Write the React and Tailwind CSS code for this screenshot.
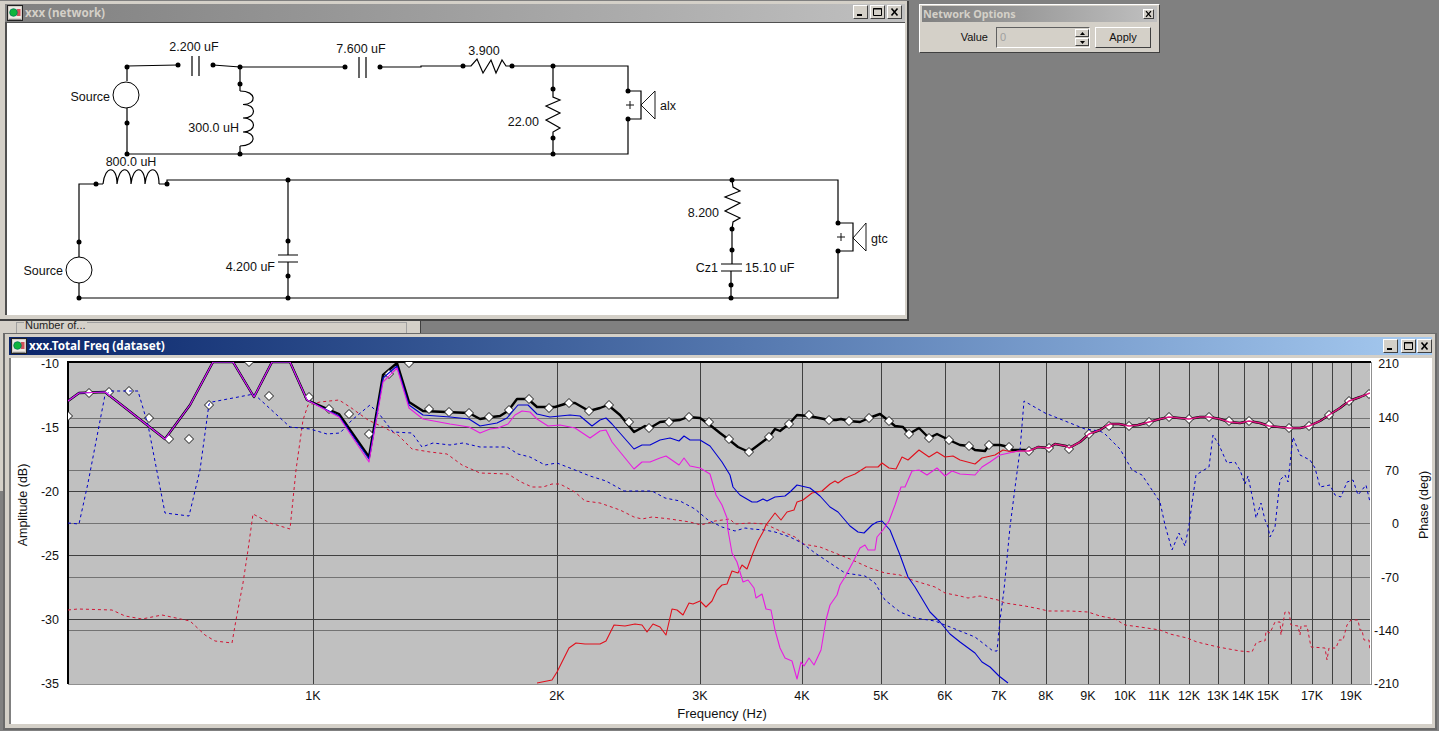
import React from "react";

const BLACK_LEFT =
  "68,401 79,393 105,392 165,439 190,405 213,362 233,362 254,397 272,362 290,362 307,400 339,414 369,457 383,375 397,363 409,402 423,411 469,413 480,419";
const BLACK_MID =
  "492,417 500,416 508,411 517,399 528,399 537,407 555,407 568,403 575,403 589,411 600,408 608,405 620,415 634,432 645,426 650,428 660,422 669,421 680,420 688,417 700,418 710,425 720,433 728,439 738,447 749,452 769,437 775,429 780,431 789,424 797,415 809,416 829,420 836,420 841,419 849,421 860,422 869,418 880,414 889,421 895,426 903,427 909,434 919,428 929,438 937,434 949,440 960,445 969,446 975,450 985,451 989,445 1000,445 1009,447 1012,450 1025,450";
const BLACK_TAIL =
  "1029,451 1038,447 1049,448 1055,444 1066,446 1069,448 1080,442 1089,434 1100,430 1106,426 1110,424 1119,424 1129,426 1138,425 1149,422 1160,419 1169,417 1189,419 1200,417 1209,417 1220,419 1229,422 1240,423 1249,421 1260,423 1269,426 1289,428 1300,428 1309,426 1320,421 1329,415 1340,408 1349,401 1360,397 1370,393";

const START = "68,401 79,393 105,392 165,439 190,405 213,362 233,362 254,397 272,362 290,362 307,400";

const BLUE =
  START +
  " 339,416 369,459 383,378 397,366 409,405 423,415 450,417 469,419 480,426 497,423 507,418 518,405 528,405 537,414 550,417 570,415 580,416 592,426 600,420 606,418 612,424 634,449 642,445 650,445 660,440 670,438 679,441 684,436 690,440 700,440 710,446 722,462 730,475 733,487 740,495 752,502 757,502 763,499 767,501 775,497 785,496 790,492 797,485 810,488 820,496 830,507 838,512 850,526 858,532 864,533 872,525 877,522 882,521 890,530 900,555 908,577 915,587 930,612 940,622 950,634 960,642 975,653 982,662 990,667 999,676 1008,683";

const MAGENTA =
  START +
  " 339,417 369,462 383,382 397,368 409,408 423,419 450,424 469,427 480,433 490,429 498,428 508,424 515,415 522,411 530,412 537,419 548,426 560,425 575,428 590,438 600,431 606,430 612,442 634,469 642,462 650,462 660,458 666,456 679,465 684,458 690,466 700,468 710,474 716,495 722,505 727,518 728,530 732,553 737,562 743,582 748,580 754,588 756,598 762,594 766,609 771,610 775,630 780,648 785,658 792,661 797,679 801,662 804,666 809,658 814,665 821,650 826,620 830,605 837,595 840,585 845,577 853,562 860,548 865,545 868,550 875,550 877,537 883,530 889,521 895,505 901,487 905,487 912,471 919,470 927,475 937,468 945,476 952,471 960,474 975,475 982,467 990,462 1000,455 1009,453 1018,451 1029,451";

const RED =
  "537,683 552,680 557,672 569,648 576,643 585,644 600,644 606,641 614,625 625,626 635,624 642,625 647,632 653,624 660,627 666,635 672,609 677,610 683,615 689,603 693,604 700,601 706,607 712,601 717,590 722,585 727,584 732,571 738,573 742,565 747,569 753,553 758,541 763,532 766,525 775,513 781,520 787,512 794,510 797,502 803,500 812,493 822,491 830,484 835,481 838,483 845,478 855,474 866,467 878,467 882,463 889,468 896,469 902,457 908,460 919,450 929,457 937,452 945,457 953,456 960,460 975,464 982,458 995,455 1003,450 1012,452 1020,451 1029,451";

const BLUE_DASH =
  "68,523 79,524 88,483 105,395 111,391 138,391 148,425 165,513 189,516 200,470 209,404 212,402 254,394 290,427 310,429 327,434 340,433 352,420 370,405 380,415 393,432 412,433 422,447 433,443 450,445 463,443 480,447 507,447 518,454 530,457 545,465 557,463 575,470 590,476 606,481 624,491 652,491 665,498 680,501 695,509 708,520 722,527 735,531 745,528 752,529 765,530 775,532 790,537 802,543 815,553 845,573 865,576 875,583 885,600 900,612 915,618 935,621 945,625 960,631 975,637 993,651 997,651 1000,620 1004,590 1008,548 1010,527 1016,480 1020,450 1024,401 1045,413 1085,429 1100,431 1105,434 1120,449 1132,470 1142,475 1160,502 1165,525 1172,550 1179,533 1185,546 1189,525 1196,475 1204,470 1209,467 1213,435 1219,445 1227,463 1235,462 1240,470 1245,484 1248,476 1254,505 1256,518 1261,503 1265,520 1268,527 1270,537 1275,527 1280,480 1285,475 1288,482 1293,437 1300,455 1310,460 1315,468 1320,487 1330,485 1335,495 1341,497 1347,482 1353,480 1358,495 1366,485 1370,502";

const RED_DASH =
  "68,610 78,609 112,610 125,616 142,619 162,615 190,621 205,635 215,641 232,643 236,620 243,583 248,550 253,514 270,523 290,529 296,470 303,420 308,405 320,402 339,400 350,407 368,420 385,428 398,435 412,449 430,452 447,454 462,465 480,473 508,474 521,482 532,487 543,487 552,484 560,484 575,492 585,501 600,503 620,510 634,517 642,519 652,517 670,519 690,522 701,525 715,521 730,519 735,524 750,523 765,524 778,530 795,537 803,544 820,547 835,553 850,559 870,568 885,573 900,575 912,580 935,587 945,593 960,596 968,598 980,596 998,600 1005,603 1025,606 1040,609 1048,611 1070,611 1088,612 1100,616 1115,619 1125,625 1140,627 1160,630 1170,634 1187,638 1197,642 1218,647 1240,651 1252,652 1256,643 1262,641 1265,641 1266,631 1270,633 1275,622 1280,622 1281,635 1285,612 1289,612 1291,625 1298,626 1300,635 1301,626 1307,626 1311,647 1325,648 1327,660 1329,648 1336,648 1339,640 1343,640 1347,625 1351,620 1358,620 1360,630 1362,630 1364,640 1369,640 1370,650";

const MARKERS = [
  [68, 416], [89, 393], [109, 392], [129, 391], [149, 418], [169, 439], [189, 439], [209, 405], [249, 362], [269, 396],
  [309, 397], [329, 409], [349, 414], [369, 434], [389, 374], [409, 363], [429, 409], [449, 412], [469, 413], [489, 417],
  [509, 410], [529, 399], [549, 408], [569, 403], [589, 411], [609, 405], [629, 422], [649, 428], [669, 422], [689, 417],
  [709, 422], [729, 439], [749, 452], [769, 437], [789, 424], [809, 415], [829, 420], [849, 421], [869, 418], [889, 421],
  [909, 434], [929, 438], [949, 440], [969, 446], [989, 445], [1009, 447], [1029, 451], [1049, 448], [1069, 449], [1089, 434],
  [1109, 426], [1129, 426], [1149, 422], [1169, 417], [1189, 419], [1209, 417], [1229, 421], [1249, 421], [1269, 425], [1289, 428],
  [1309, 426], [1329, 415], [1349, 401], [1369, 394],
];

const FREQ_LINES = [313, 557, 700, 802, 881, 945, 999, 1046, 1088, 1125, 1159, 1189, 1218, 1244, 1268, 1291, 1312, 1332, 1351];
const FREQ_LABELS = [
  ["1K", 313], ["2K", 557], ["3K", 700], ["4K", 802], ["5K", 881], ["6K", 945], ["7K", 999], ["8K", 1046], ["9K", 1088], ["10K", 1125],
  ["11K", 1159], ["12K", 1189], ["13K", 1218], ["14K", 1243], ["15K", 1268], ["17K", 1312], ["19K", 1351],
];
const AMP_LINES = [427, 491, 555, 619];
const PHASE_LINES = [418, 470, 523, 577, 630];
const AMP_LABELS = [["-10", 363], ["-15", 427], ["-20", 491], ["-25", 555], ["-30", 619], ["-35", 683]];
const PHASE_LABELS = [["210", 363], ["140", 417], ["70", 470], ["0", 523], ["-70", 577], ["-140", 630], ["-210", 683]];

const NODES = [
  [127, 67], [178, 65], [213, 65], [240, 67], [345, 67], [380, 67], [463, 66], [512, 66], [553, 66], [240, 84], [127, 123], [127, 154],
  [240, 154], [553, 154], [553, 89], [553, 138], [628, 91], [628, 119], [96, 184], [167, 184], [288, 180], [288, 241], [288, 276],
  [79, 242], [79, 298], [288, 298], [732, 180], [732, 229], [732, 250], [731, 285], [731, 298], [838, 223], [838, 251],
];

const WIRES = [
  "127,66 178,65",
  "213,65 240,67 345,67",
  "380,67 421,67 421,66 463,66",
  "463,66 471,66 477,59 483,73 491,60 496,73 502,60 506,66 512,66 628,66 628,91 641,91 641,119 628,119 628,154 127,154 127,108",
  "127,81 127,67",
  "240,67 240,91",
  "240,146 240,154",
  "553,66 553,97 560,100 546,106 560,113 546,120 560,128 553,132 553,154",
  "79,283 79,298 838,298 838,251 853,251 853,223 838,223 838,180 167,180 167,184 159,184",
  "103,184 79,184 79,257",
  "288,180 288,255",
  "288,262 288,298",
  "732,180 733,187 740,191 725,197 740,203 725,211 740,218 733,222 732,229 732,264",
  "731,271 731,298",
];

function Txt({ x, y, anchor = "middle", size = 12.5, children }) {
  return (
    <text x={x} y={y + 4.5} textAnchor={anchor} fontSize={size} fill="#111">
      {children}
    </text>
  );
}

function WinIcon() {
  return (
    <svg width="16" height="16" viewBox="0 0 16 16" className="shrink-0">
      <rect x="0.5" y="0.5" width="15" height="15" fill="#d4d0c8" stroke="#222" />
      <rect x="2" y="2" width="12" height="11" fill="#eee9e4" />
      <rect x="10" y="4" width="3.500" height="7" fill="#d0505a" />
      <circle cx="6.500" cy="7.500" r="3.800" fill="#0fb53c" stroke="#075" strokeWidth="0.8" />
      <path d="M1.500 14.500h13" stroke="#888" />
    </svg>
  );
}

function CtlButton({ kind, small }) {
  const size = small ? "w-[11px] h-[10px]" : "w-[15px] h-[14px]";
  return (
    <div className={`${size} flex items-center justify-center bg-[#d4d0c8] border border-t-white border-l-white border-r-[#404040] border-b-[#404040] shrink-0`}>
      <svg width="11" height="10" viewBox="0 0 11 10">
        {kind === "min" && <rect x="2" y="7" width="5" height="2" fill="#000" />}
        {kind === "max" && <path d="M1.500 1.500h8v7h-8z M1 2h9" fill="none" stroke="#000" strokeWidth="1" />}
        {kind === "close" && <path d="M2.500 1.500l6 7M8.500 1.500l-6 7" stroke="#000" strokeWidth="1.600" fill="none" />}
      </svg>
    </div>
  );
}

function Plus({ x, y }) {
  return <path d={`M${x - 4} ${y}h8M${x} ${y - 4}v8`} stroke="#111" strokeWidth="1" fill="none" />;
}

function NetworkDiagram() {
  return (
    <svg width="898" height="292" viewBox="7 23 898 292" className="block">
      <g fill="none" stroke="#000" strokeWidth="1.200">
        {WIRES.map((p) => (
          <polyline key={p} points={p} />
        ))}
        <circle cx="126" cy="95" r="13" strokeWidth="1" />
        <circle cx="79" cy="270" r="13" strokeWidth="1" />
        <path d="M192 56v20M199 56v20M359 57v21M366 57v21" />
        <path d="M278 255h20M278 262h20M721 264h21M721 271h21" />
        <path d="M240 91c17 0 17 13.500 3 13.500c14 0 14 13.500 0 13.500c14 0 14 14 0 14c14 0 14 14 -3 14" />
        <path d="M103 184c2 -19 14 -19 14 0c2 -19 14 -19 14 0c2 -19 14 -19 14 0c2 -19 14 -19 14 0" />
        <path d="M641 105l14 -14v28zM853 238l13 -15v28z" strokeWidth="0.900" />
      </g>
      {NODES.map(([x, y]) => (
        <circle key={`${x}-${y}`} cx={x} cy={y} r="2.500" fill="#000" />
      ))}
      <Plus x={630} y={105} />
      <Plus x={841} y={237} />
      <Txt x={194} y={46}>2.200 uF</Txt>
      <Txt x={361} y={48}>7.600 uF</Txt>
      <Txt x={484} y={50}>3.900</Txt>
      <Txt x={110} y={96} anchor="end">Source</Txt>
      <Txt x={239} y={127} anchor="end">300.0 uH</Txt>
      <Txt x={539} y={121} anchor="end">22.00</Txt>
      <Txt x={660} y={105} anchor="start">alx</Txt>
      <Txt x={131} y={161}>800.0 uH</Txt>
      <Txt x={63} y={270} anchor="end">Source</Txt>
      <Txt x={275} y={266} anchor="end">4.200 uF</Txt>
      <Txt x={719} y={212} anchor="end">8.200</Txt>
      <Txt x={718} y={267} anchor="end">Cz1</Txt>
      <Txt x={745} y={267} anchor="start">15.10 uF</Txt>
      <Txt x={871} y={238} anchor="start">gtc</Txt>
    </svg>
  );
}

function FreqChart() {
  return (
    <svg width="1421" height="366" viewBox="11 358 1421 366" className="block overflow-visible">
      <defs>
        <clipPath id="plot">
          <rect x="68" y="362" width="1302" height="322" />
        </clipPath>
      </defs>
      <rect x="68" y="362" width="1302" height="322" fill="#c0c0c0" />
      <g shapeRendering="crispEdges">
        {PHASE_LINES.map((y) => (
          <line key={y} x1="68" x2="1370" y1={y} y2={y} stroke="#737373" strokeWidth="1" />
        ))}
        {AMP_LINES.map((y) => (
          <line key={y} x1="68" x2="1370" y1={y} y2={y} stroke="#404040" strokeWidth="1" />
        ))}
        {FREQ_LINES.map((x) => (
          <line key={x} x1={x} x2={x} y1="362" y2="684" stroke="#404040" strokeWidth="1" />
        ))}
        <line x1="67" x2="1371" y1="362" y2="362" stroke="#000" strokeWidth="2" />
        <line x1="68" x2="68" y1="362" y2="684" stroke="#000" strokeWidth="2" />
        <line x1="68" x2="1371" y1="684" y2="684" stroke="#909090" strokeWidth="1" />
        <line x1="1371" x2="1371" y1="362" y2="685" stroke="#909090" strokeWidth="1" />
      </g>
      <g clipPath="url(#plot)" fill="none" strokeLinejoin="round">
        <polyline points={`${BLACK_LEFT} ${BLACK_MID} ${BLACK_TAIL}`} stroke="#000" strokeWidth="2.400" />
        {MARKERS.map(([x, y]) => (
          <path key={x} d={`M${x} ${y - 4.5}L${x + 4.5} ${y}L${x} ${y + 4.5}L${x - 4.5} ${y}Z`} fill="#fff" stroke="#000" strokeWidth="0.900" />
        ))}
        <polyline points={RED_DASH} stroke="#d01535" strokeWidth="1" strokeDasharray="3 3" />
        <polyline points={BLUE_DASH} stroke="#0000c8" strokeWidth="1" strokeDasharray="3 3" />
        <polyline points={RED} stroke="#e0101c" strokeWidth="1.100" />
        <polyline points={BLUE} stroke="#0000d0" strokeWidth="1.100" />
        <polyline points={MAGENTA} stroke="#e81ce0" strokeWidth="1.100" />
        <polyline points={BLACK_TAIL} stroke="#dc1580" strokeWidth="1.500" />
      </g>
      {AMP_LABELS.map(([t, y]) => (
        <Txt key={t} x={59} y={y} anchor="end">{t}</Txt>
      ))}
      {PHASE_LABELS.map(([t, y]) => (
        <Txt key={t} x={1399} y={y} anchor="end">{t}</Txt>
      ))}
      {FREQ_LABELS.map(([t, x]) => (
        <Txt key={t} x={x} y={695}>{t}</Txt>
      ))}
      <Txt x={722} y={713} size={13}>Frequency (Hz)</Txt>
      <g transform="translate(22 505) rotate(-90)">
        <Txt x={0} y={0}>Amplitude (dB)</Txt>
      </g>
      <g transform="translate(1423 505) rotate(-90)">
        <Txt x={0} y={0}>Phase (deg)</Txt>
      </g>
    </svg>
  );
}

export default function App() {
  return (
    <div className="relative w-[1439px] h-[731px] overflow-hidden bg-[#808080] font-['Liberation_Sans',sans-serif]">
      {/* panel hidden behind the two big windows */}
      <div className="absolute left-0 top-[300px] w-[421px] h-[191px] bg-[#d4d0c8] border-r border-[#404040]">
        <div className="absolute left-[16px] top-[22px] w-[391px] h-[40px] border border-[#a0a0a0]">
          <span className="absolute left-[7px] -top-[3px] px-[1px] bg-[#d4d0c8] text-[11px] leading-[11px] text-[#222]">Number of...</span>
        </div>
      </div>

      {/* network window */}
      <div className="absolute left-0 top-[1px] w-[909px] h-[320px] flex flex-col pt-[3px] pl-[5px] pr-[2px] bg-[#d4d0c8] border-r-2 border-b-2 border-[#404040]">
        <div className="h-[18px] flex items-center gap-[2px] pl-[2px] pr-[3px] bg-gradient-to-r from-[#808080] to-[#c0c0c0]">
          <WinIcon />
          <span className="text-[11.600px] -mt-[1px] font-bold text-[#d4d0c8] font-['Noto_Sans',sans-serif]">xxx (network)</span>
          <div className="ml-auto flex -mt-[2px]">
            <CtlButton kind="min" />
            <div className="w-[2px]" />
            <CtlButton kind="max" />
            <div className="w-[2px]" />
            <CtlButton kind="close" />
          </div>
        </div>
        <div className="h-[293px] w-[900px] bg-white border-l-2 border-t border-[#505050]">
          <NetworkDiagram />
        </div>
      </div>

      {/* network options palette */}
      <div className="absolute left-[919px] top-[4px] w-[241px] h-[49px] flex flex-col pt-[1px] px-[2px] bg-[#d4d0c8] border border-t-white border-l-white border-r-[#404040] border-b-[#404040]">
        <div className="h-[16px] flex items-center justify-between pl-[1px] pr-[3px] bg-gradient-to-r from-[#808080] to-[#c0c0c0]">
          <span className="text-[10.800px] font-bold text-[#d4d0c8] font-['Noto_Sans',sans-serif]">Network Options</span>
          <CtlButton kind="close" small />
        </div>
        <div className="mt-[5px] flex items-center text-[11px] text-[#111]">
          <span className="w-[66px] text-right">Value</span>
          <div className="ml-[8px] w-[94px] h-[21px] flex items-center justify-between bg-[#d4d0c8] border border-t-[#606060] border-l-[#606060] border-r-white border-b-white">
            <span className="pl-[3px] text-[#a0a0a0]">0</span>
            <div className="flex flex-col gap-[1px]">
              <div className="w-[14px] h-[8px] flex items-center justify-center bg-[#d4d0c8] border border-t-white border-l-white border-r-[#404040] border-b-[#404040]">
                <svg width="5" height="3" viewBox="0 0 5 3"><path d="M2.500 0l2.500 3h-5z" fill="#000" /></svg>
              </div>
              <div className="w-[14px] h-[8px] flex items-center justify-center bg-[#d4d0c8] border border-t-white border-l-white border-r-[#404040] border-b-[#404040]">
                <svg width="5" height="3" viewBox="0 0 5 3"><path d="M0 0h5l-2.500 3z" fill="#000" /></svg>
              </div>
            </div>
          </div>
          <div className="ml-[5px] w-[56px] h-[21px] flex items-center justify-center bg-[#d4d0c8] border border-t-white border-l-white border-r-[#404040] border-b-[#404040]">
            Apply
          </div>
        </div>
      </div>

      {/* dataset window */}
      <div className="absolute left-[3px] top-[333px] w-[1434px] h-[397px] flex flex-col pt-[3px] pl-[4px] pr-[3px] bg-[#d4d0c8] border-l-2 border-r-2 border-b-2 border-t border-[#6a6a6a]">
        <div className="h-[18px] flex items-center gap-[2px] pl-[2px] bg-gradient-to-r from-[#0a246a] to-[#a6caf0]">
          <WinIcon />
          <span className="text-[11.700px] font-bold text-white font-['Noto_Sans',sans-serif]">xxx.Total Freq (dataset)</span>
          <div className="ml-auto flex">
            <CtlButton kind="min" />
            <div className="w-[3px]" />
            <CtlButton kind="max" />
            <div className="w-[1px]" />
            <CtlButton kind="close" />
          </div>
        </div>
        <div className="mt-[3px] w-[1423px] h-[366px] bg-white border-l-2 border-[#808080] box-border">
          <FreqChart />
        </div>
      </div>
    </div>
  );
}
